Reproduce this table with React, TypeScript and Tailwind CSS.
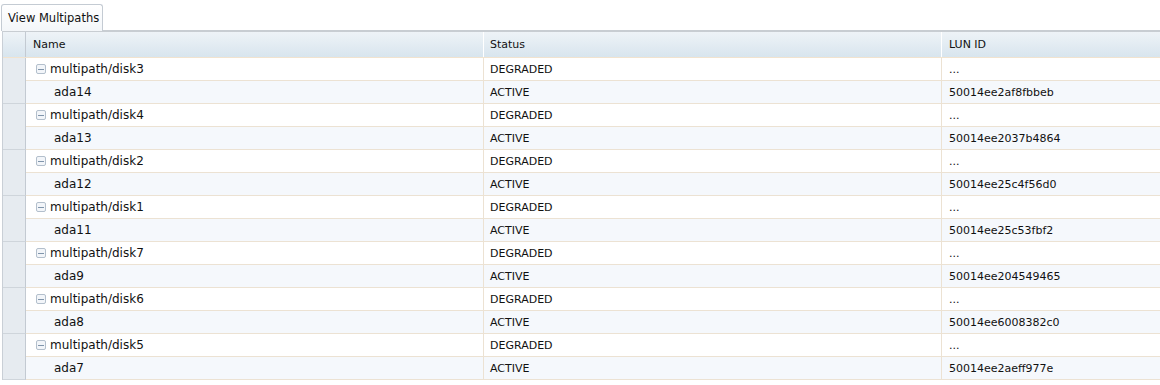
const groups = [
  { disk: 'multipath/disk3', child: 'ada14', lun: '50014ee2af8fbbeb' },
  { disk: 'multipath/disk4', child: 'ada13', lun: '50014ee2037b4864' },
  { disk: 'multipath/disk2', child: 'ada12', lun: '50014ee25c4f56d0' },
  { disk: 'multipath/disk1', child: 'ada11', lun: '50014ee25c53fbf2' },
  { disk: 'multipath/disk7', child: 'ada9', lun: '50014ee204549465' },
  { disk: 'multipath/disk6', child: 'ada8', lun: '50014ee6008382c0' },
  { disk: 'multipath/disk5', child: 'ada7', lun: '50014ee2aeff977e' },
];

function Collapse() {
  return (
    <span className="mr-[4px] ml-[10px] inline-flex h-[10px] w-[10px] items-center justify-center rounded-[2px] border border-[#b3bfcc] bg-[#f2f5f9]">
      <span className="h-px w-[6px] bg-[#8095ab]" />
    </span>
  );
}

function Row({ child, name, status, lun }: { child?: boolean; name: string; status: string; lun: string }) {
  return (
    <div className={`flex h-[23px] ${child ? 'bg-[#f5f8fc]' : 'bg-white'}`}>
      <div className={`w-[23px] shrink-0 border-r border-[#c3cad2] bg-[#e6ebf0] ${child ? 'border-b border-b-[#cfd5db]' : ''}`} />
      <div className="flex w-[458px] shrink-0 items-center border-r border-b border-[#ece2d3] text-[12px]">
        {child ? <span className="pl-[28px]">{name}</span> : <><Collapse /><span>{name}</span></>}
      </div>
      <div className="flex w-[458px] shrink-0 items-center border-r border-b border-[#ece2d3] pl-[6px] pt-[3px]">{status}</div>
      <div className="flex flex-1 items-center border-b border-[#ece2d3] pl-[7px] pt-[3px]">{lun}</div>
    </div>
  );
}

export default function App() {
  return (
    <div className="h-[385px] w-[1160px] overflow-hidden bg-white text-[11px] text-[#111] font-['DejaVu_Sans',Verdana,sans-serif]">
      <div className="flex h-[30px] items-end pl-px">
        <div className="relative z-10 -mb-px flex h-[27px] w-[102px] items-center rounded-t-[3px] border border-b-0 border-[#c4cbd3] bg-gradient-to-b from-white to-[#f3f6f9] pl-[6px] pt-px text-[11.5px]">
          View Multipaths
        </div>
      </div>
      <div className="ml-[2px] border-l border-[#c9cfd6]">
        <div className="flex h-[28px] border-t-[2px] border-[#c8cdd2] bg-gradient-to-b from-[#eef3f7] to-[#d8e5ee] border-b border-b-[#f1e3cf]">
          <div className="w-[23px] shrink-0 border-r border-[#c3cad2]" />
          <div className="flex w-[458px] shrink-0 items-center border-r border-white pl-[7px] pt-px">Name</div>
          <div className="flex w-[458px] shrink-0 items-center border-r border-white pl-[6px] pt-px">Status</div>
          <div className="flex flex-1 items-center pl-[7px] pt-px">LUN ID</div>
        </div>
        {groups.map((g) => (
          <div key={g.disk}>
            <Row name={g.disk} status="DEGRADED" lun="..." />
            <Row child name={g.child} status="ACTIVE" lun={g.lun} />
          </div>
        ))}
      </div>
    </div>
  );
}
